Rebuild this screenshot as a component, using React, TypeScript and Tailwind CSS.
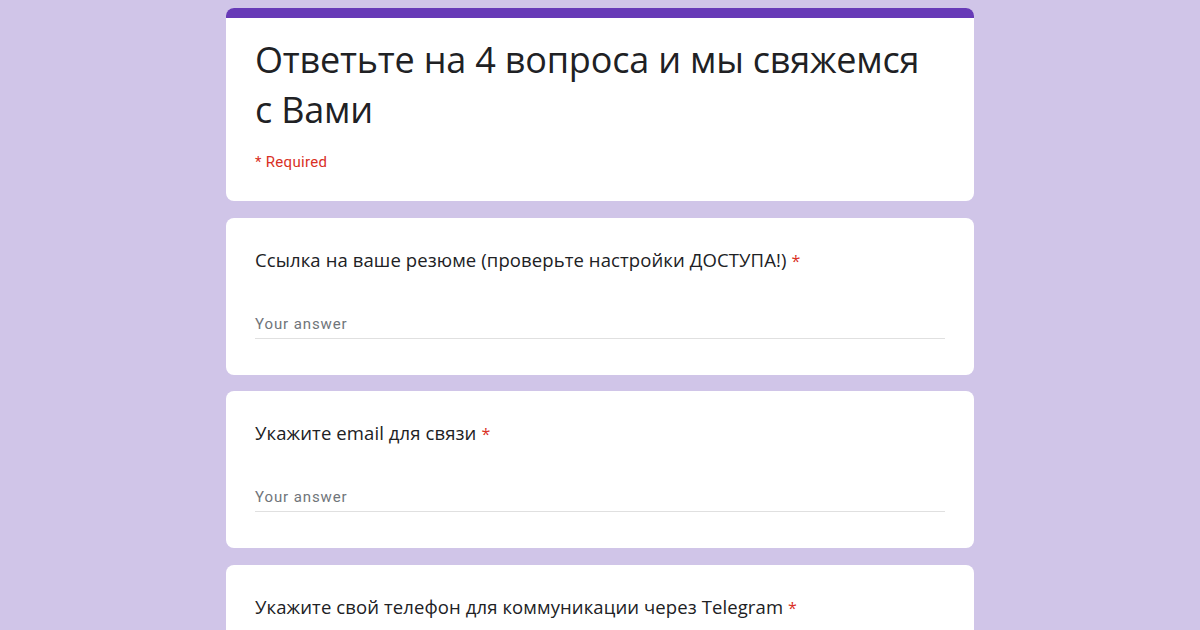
import React from "react";

const questions = [
  "Ссылка на ваше резюме (проверьте настройки ДОСТУПА!)",
  "Укажите email для связи",
  "Укажите свой телефон для коммуникации через Telegram",
];

function Question({ title }: { title: string }) {
  return (
    <div className="bg-white rounded-lg px-[29px] pt-[30px] pb-[36px]">
      <div className="text-[18.5px] leading-[24px] text-[#202124] tracking-[0.1px]">
        {title} <span className="text-[#d93025] text-[16px] leading-[16px]">*</span>
      </div>
      <div className="mt-[42px] pb-[4px] border-b border-[#e0e0e0] text-[15px] leading-[20px] text-[#70757a] tracking-[0.9px] font-['Roboto',sans-serif]">
        Your answer
      </div>
    </div>
  );
}

export default function App() {
  return (
    <div className="w-full bg-[#d0c5e8] font-['Open_Sans',sans-serif] overflow-hidden h-[630px]">
      <div className="w-[748px] mx-auto pt-[8px] flex flex-col gap-[16.5px]">
        <div className="bg-white rounded-lg overflow-hidden">
          <div className="h-[10px] bg-[#673ab7]" />
          <div className="px-[29px] pt-[17px] pb-[29px]">
            <h1 className="max-w-[670px] text-[36px] leading-[50px] text-[#202124] tracking-[-0.2px]">
              Ответьте на 4 вопроса и мы свяжемся с Вами
            </h1>
            <div className="mt-[17px] text-[15px] leading-[20px] text-[#d93025] tracking-[0.3px] font-['Roboto',sans-serif]">
              * Required
            </div>
          </div>
        </div>
        {questions.map((q) => (
          <Question key={q} title={q} />
        ))}
      </div>
    </div>
  );
}
